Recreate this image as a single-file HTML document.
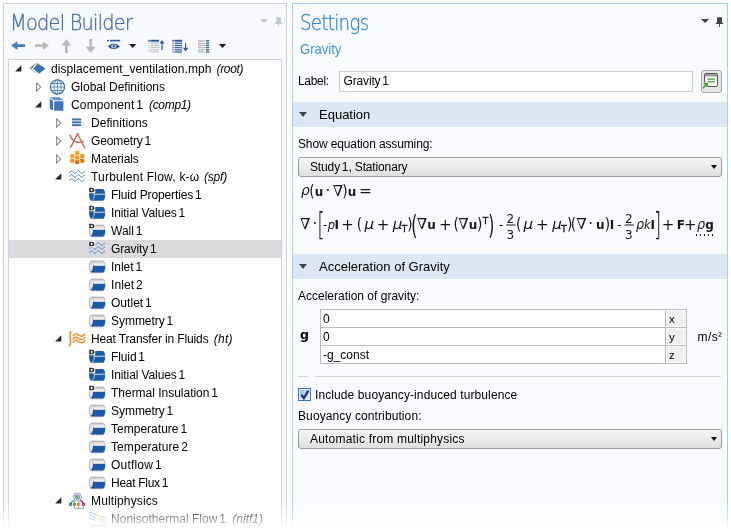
<!DOCTYPE html>
<html>
<head>
<meta charset="utf-8">
<title>Model Builder - Settings</title>
<style>
html,body{margin:0;padding:0;}
body{width:731px;height:529px;overflow:hidden;background:#fff;position:relative;font-family:"Liberation Sans",sans-serif;font-size:12px;color:#000;}
.abs{position:absolute;}
#app{position:absolute;left:0;top:0;width:731px;height:529px;will-change:transform;}
#left{position:absolute;left:3px;top:3px;width:282px;height:530px;background:#f8f9fc;border:1px solid #cdd0d7;}
#gap{position:absolute;left:287px;top:0;width:5px;height:529px;background:#fff;}
#right{position:absolute;left:292px;top:3px;width:434px;height:530px;background:#f9fbfe;border:1px solid #a3cdf6;}
.title{-webkit-text-stroke:0.3px currentColor;position:absolute;font-family:"DejaVu Sans Light","DejaVu Sans",sans-serif;font-weight:200;font-size:20.5px;line-height:24px;white-space:nowrap;transform-origin:0 0;}
#tree{position:absolute;left:8px;top:59px;width:272px;height:480px;background:#fff;border:1px solid #d0d4dc;}
.row{position:absolute;left:9px;width:272px;height:18px;line-height:18px;white-space:nowrap;font-size:12px;}
.row span.t{position:absolute;top:0;}
.row i{font-style:italic;}
.sel{background:#dadadc;}
.row .t{position:absolute;top:0;}
.row .it{font-style:italic;}
.ns{letter-spacing:-1.5px !important;}
.row .dim{color:#9a9a9a;}
.row svg{position:absolute;top:0;}
.row svg.ar{top:5px;}
.lbl{position:absolute;white-space:nowrap;font-size:12px;line-height:14px;}
.sec{position:absolute;left:293px;width:434px;height:25px;background:#dde7f4;}
.sec span{position:absolute;left:26px;top:5px;font-size:13px;line-height:16px;}
.sec:before{content:"";position:absolute;left:5.6px;top:10.4px;border-left:4.5px solid transparent;border-right:4.5px solid transparent;border-top:5px solid #444;}
.combo{position:absolute;left:298px;width:422px;height:18px;border:1px solid #9c9c9c;border-radius:3px;background:linear-gradient(#f3f3f3,#ebebeb 50%,#dfdfdf);box-shadow:inset 0 1px 0 #fcfcfc;}
.combo>span{position:absolute;left:11px;top:2px;font-size:12px;line-height:15px;}
.combo:after{content:"";position:absolute;right:4.4px;top:7px;border-left:3.6px solid transparent;border-right:3.6px solid transparent;border-top:4px solid #111;}
.inp{position:absolute;background:#fff;border:1px solid #cbced5;}
</style>
</head>
<body>
<div id="app">
<div id="left"></div>
<div id="gap"></div>
<div id="right"></div>

<div class="title" style="left:9.8px;top:11px;color:#3f6faf;letter-spacing:-0.8px;transform:scaleX(0.943);">Model Builder</div>
<div class="title" style="left:299.6px;top:11px;color:#2f86e0;letter-spacing:-0.8px;transform:scaleX(0.89);">Settings</div>
<div class="lbl" style="left:299.5px;top:41px;font-size:15px;line-height:16px;color:#3f92e4;transform-origin:0 0;transform:scaleX(0.871);">Gravity</div>

<svg class="abs" style="left:0;top:32px;" width="290" height="26" viewBox="0 32 290 26"><path d="M11.2,45.6 L17.4,41.3 L17.4,44.2 L25,44.2 L25,47 L17.4,47 L17.4,49.9 Z" fill="#3f7cc0"/><path d="M49,45.6 L42.8,41.3 L42.8,44.2 L35,44.2 L35,47 L42.8,47 L42.8,49.9 Z" fill="#bcbcbc"/><path d="M66.4,38.9 L71.3,45.4 L67.8,45.4 L67.8,53 L65,53 L65,45.4 L61.5,45.4 Z" fill="#bcbcbc"/><path d="M90.7,53.2 L95.6,46.7 L92.1,46.7 L92.1,39 L89.3,39 L89.3,46.7 L85.8,46.7 Z" fill="#bcbcbc"/><rect x="107.2" y="39.8" width="1.8" height="1.6" fill="#2d5a94"/><rect x="110" y="39.8" width="10.2" height="1.6" fill="#2d5a94"/><path d="M107.6,46.4 Q113.8,40.8 120,46.4 Q113.8,51.6 107.6,46.4 Z" fill="#2d5a94"/><ellipse cx="113.8" cy="46.3" rx="2.6" ry="1.7" fill="#eaf0fa"/><circle cx="113.8" cy="46.3" r="1.2" fill="#2d5a94"/><polygon points="129,44.1 136.2,44.1 132.6,48" fill="#1a1a1a"/><rect x="148.2" y="39.8" width="1.5" height="1.8" fill="#2d5a94"/><rect x="150.4" y="39.8" width="8.6" height="1.9" fill="#2d5a94"/><rect x="148.4" y="42.7" width="1.1999999999999886" height="1" fill="#b9b9b9"/><rect x="148.4" y="44.9" width="1.1999999999999886" height="1" fill="#b9b9b9"/><rect x="148.4" y="47.1" width="1.1999999999999886" height="1" fill="#b9b9b9"/><rect x="148.4" y="49.3" width="1.1999999999999886" height="1" fill="#b9b9b9"/><rect x="148.4" y="51.4" width="1.1999999999999886" height="1" fill="#b9b9b9"/><rect x="150.6" y="42.7" width="8.400000000000006" height="1" fill="#b9b9b9"/><rect x="150.6" y="44.9" width="8.400000000000006" height="1" fill="#b9b9b9"/><rect x="150.6" y="47.1" width="8.400000000000006" height="1" fill="#b9b9b9"/><rect x="150.6" y="49.3" width="8.400000000000006" height="1" fill="#b9b9b9"/><rect x="150.6" y="51.4" width="8.400000000000006" height="1" fill="#b9b9b9"/><path d="M162,40 L164.6,43.6 L162.6,43.6 L162.6,50 L161.4,50 L161.4,43.6 L159.4,43.6 Z" fill="#2d5a94"/><rect x="172.2" y="39.8" width="1.5" height="1.8" fill="#2d5a94"/><rect x="174.4" y="39.8" width="7.8" height="1.9" fill="#2d5a94"/><rect x="172.4" y="42.7" width="1.1999999999999886" height="1.2" fill="#2d5a94"/><rect x="172.4" y="44.9" width="1.1999999999999886" height="1.2" fill="#2d5a94"/><rect x="172.4" y="47.1" width="1.1999999999999886" height="1.2" fill="#2d5a94"/><rect x="172.4" y="49.3" width="1.1999999999999886" height="1.2" fill="#2d5a94"/><rect x="172.4" y="51.4" width="1.1999999999999886" height="1.2" fill="#2d5a94"/><rect x="174.6" y="42.7" width="7.599999999999994" height="1.2" fill="#2d5a94"/><rect x="174.6" y="44.9" width="7.599999999999994" height="1.2" fill="#2d5a94"/><rect x="174.6" y="47.1" width="7.599999999999994" height="1.2" fill="#2d5a94"/><rect x="174.6" y="49.3" width="7.599999999999994" height="1.2" fill="#2d5a94"/><rect x="174.6" y="51.4" width="7.599999999999994" height="1.2" fill="#2d5a94"/><path d="M185.6,51.6 L188.4,47.8 L186.2,47.8 L186.2,43.2 L185,43.2 L185,47.8 L182.8,47.8 Z" fill="#2d5a94"/><rect x="198" y="40.2" width="7" height="1.3" fill="#b9b9b9"/><rect x="198" y="42.5" width="7" height="1.3" fill="#b9b9b9"/><rect x="198" y="44.7" width="7" height="1.3" fill="#b9b9b9"/><rect x="198" y="46.9" width="7" height="1.3" fill="#b9b9b9"/><rect x="198" y="49.1" width="7" height="1.3" fill="#b9b9b9"/><rect x="198" y="51.3" width="7" height="1.3" fill="#b9b9b9"/><rect x="206" y="40.2" width="3.1999999999999886" height="1.3" fill="#2d5a94"/><rect x="206" y="42.5" width="3.1999999999999886" height="1.3" fill="#2d5a94"/><rect x="206" y="44.7" width="3.1999999999999886" height="1.3" fill="#2d5a94"/><rect x="206" y="46.9" width="3.1999999999999886" height="1.3" fill="#2d5a94"/><rect x="206" y="49.1" width="3.1999999999999886" height="1.3" fill="#2d5a94"/><rect x="206" y="51.3" width="3.1999999999999886" height="1.3" fill="#2d5a94"/><polygon points="218.8,44.1 226.2,44.1 222.5,48" fill="#1a1a1a"/></svg>
<svg class="abs" style="left:255px;top:14px;" width="32" height="16" viewBox="255 14 32 16"><polygon points="259.8,19 268.2,19 264,23" fill="#c3c7cf"/><path d="M276.3,17.2 H281 V22.8 H282.2 V23.9 H279 V27 H278.2 V23.9 H275 V22.8 H276.3 Z" fill="#c3c7cf"/></svg>
<svg class="abs" style="left:696px;top:14px;" width="32" height="16" viewBox="696 14 32 16"><polygon points="700.9,19 709.3,19 705.1,23" fill="#444"/><path d="M717,17.2 H722 V22.8 H723.2 V23.9 H720 V27 H719.1 V23.9 H715.8 V22.8 H717 Z" fill="#444"/></svg>
<div id="tree"></div>
<div id="rows">
<div class="row" style="top:60px;"><svg class="ar" style="left:6px;top:5px;" width="8" height="8" viewBox="0 0 8 8"><polygon points="6.3,0.3 6.3,6.5 0.1,6.5" fill="#262626"/></svg><svg class="ic" style="left:20px;" width="18" height="18" viewBox="0 0 18 18"><polygon points="0.5,8.2 7.6,2.8 16.5,8.6 9.2,14.4" fill="#3b6fb3"/><polyline points="7.9,3.4 3.5,8.9 9.7,14.2" fill="none" stroke="#fff" stroke-width="1.35"/><line x1="0.8" y1="8.2" x2="3.5" y2="8.9" stroke="#fff" stroke-width="0.6"/></svg><span id="t0" class="t" style="left:42px;letter-spacing:0.086px;">displacement_ventilation.mph</span><span id="i0" class="t it" style="left:207.5px;letter-spacing:-0.312px;">(root)</span></div>
<div class="row" style="top:78px;"><svg class="ar" style="left:27px;top:4px;" width="7" height="10" viewBox="0 0 7 10"><polygon points="0.6,0.9 4.8,5 0.6,9.1" fill="#fff" stroke="#8f8f8f" stroke-width="1.1"/></svg><svg class="ic" style="left:40px;" width="18" height="18" viewBox="0 0 18 18"><circle cx="8.5" cy="9" r="7.1" fill="#fff" stroke="#3f76bb" stroke-width="1.3"/><g fill="none" stroke="#4a80c4" stroke-width="0.85"><ellipse cx="8.5" cy="9" rx="3.5" ry="7.1"/><line x1="8.5" y1="2" x2="8.5" y2="16"/><line x1="1.5" y1="9" x2="15.5" y2="9"/><line x1="2.6" y1="5.5" x2="14.4" y2="5.5"/><line x1="2.6" y1="12.5" x2="14.4" y2="12.5"/></g></svg><span id="t1" class="t" style="left:62px;letter-spacing:-0.003px;">Global Definitions</span></div>
<div class="row" style="top:96px;"><svg class="ar" style="left:26px;top:5px;" width="8" height="8" viewBox="0 0 8 8"><polygon points="6.3,0.3 6.3,6.5 0.1,6.5" fill="#262626"/></svg><svg class="ic" style="left:40px;" width="18" height="18" viewBox="0 0 18 18"><polygon points="0.8,1.6 10.4,1.6 14.4,4.6 14.4,14.7 4.6,14.7 0.8,12.6" fill="#3f76bb"/><polygon points="0.8,1.6 10.4,1.6 14.4,4.6 4.6,4.6" fill="#5e8fcc"/><polyline points="1.1,1.9 4.6,4.7 14.4,4.7" fill="none" stroke="#fff" stroke-width="1.1"/><line x1="4.6" y1="4.7" x2="4.6" y2="14.7" stroke="#fff" stroke-width="1.1"/></svg><span id="t2" class="t" style="left:62px;letter-spacing:0.147px;">Component<span class="ns"> </span>1</span><span id="i2" class="t it" style="left:140.0px;letter-spacing:-0.317px;">(comp1)</span></div>
<div class="row" style="top:114px;"><svg class="ar" style="left:47px;top:4px;" width="7" height="10" viewBox="0 0 7 10"><polygon points="0.6,0.9 4.8,5 0.6,9.1" fill="#fff" stroke="#8f8f8f" stroke-width="1.1"/></svg><svg class="ic" style="left:60px;" width="18" height="18" viewBox="0 0 18 18"><rect x="3" y="4.5" width="9.2" height="1.9" fill="#3a6fb7"/><rect x="3" y="7.4" width="9.2" height="1.9" fill="#3a6fb7"/><rect x="3" y="10.2" width="9.2" height="1.9" fill="#3a6fb7"/></svg><span id="t3" class="t" style="left:82px;letter-spacing:0.061px;">Definitions</span></div>
<div class="row" style="top:132px;"><svg class="ar" style="left:47px;top:4px;" width="7" height="10" viewBox="0 0 7 10"><polygon points="0.6,0.9 4.8,5 0.6,9.1" fill="#fff" stroke="#8f8f8f" stroke-width="1.1"/></svg><svg class="ic" style="left:60px;" width="18" height="18" viewBox="0 0 18 18"><g fill="none" stroke="#dd6450" stroke-width="1.35" stroke-linecap="round"><path d="M8.6,1.8 L1.6,15.6"/><path d="M8.6,1.8 L15.6,15.6"/><path d="M1.2,3.2 C3,9.6 9.5,11.6 14.2,9.4"/><circle cx="8.6" cy="2.3" r="1.1" fill="#dd6450" stroke="none"/></g></svg><span id="t4" class="t" style="left:82px;letter-spacing:-0.122px;">Geometry<span class="ns"> </span>1</span></div>
<div class="row" style="top:150px;"><svg class="ar" style="left:47px;top:4px;" width="7" height="10" viewBox="0 0 7 10"><polygon points="0.6,0.9 4.8,5 0.6,9.1" fill="#fff" stroke="#8f8f8f" stroke-width="1.1"/></svg><svg class="ic" style="left:60px;" width="18" height="18" viewBox="0 0 18 18"><rect x="6.2" y="1" width="4.1" height="3.9" fill="#f8a21f"/><rect x="1.2" y="4.2" width="4.1" height="3.9" fill="#f8a21f"/><rect x="6.2" y="5.6" width="4.1" height="3.9" fill="#f39214"/><rect x="11.2" y="4.2" width="4.1" height="3.9" fill="#f39214"/><rect x="1.2" y="8.8" width="4.1" height="3.9" fill="#f39214"/><rect x="6.2" y="10.2" width="4.1" height="3.9" fill="#d9740f"/><rect x="11.2" y="8.8" width="4.1" height="3.9" fill="#d9740f"/></svg><span id="t5" class="t" style="left:82px;letter-spacing:-0.11px;">Materials</span></div>
<div class="row" style="top:168px;"><svg class="ar" style="left:46px;top:5px;" width="8" height="8" viewBox="0 0 8 8"><polygon points="6.3,0.3 6.3,6.5 0.1,6.5" fill="#262626"/></svg><svg class="ic" style="left:60px;" width="18" height="18" viewBox="0 0 18 18"><polyline points="0.20,4.75 0.70,4.19 1.20,3.61 1.70,3.13 2.20,2.85 2.70,2.82 3.20,3.06 3.70,3.50 4.20,4.07 4.70,4.64 5.20,5.11 5.70,5.37 6.20,5.37 6.70,5.11 7.20,4.64 7.70,4.07 8.20,3.50 8.70,3.06 9.20,2.82 9.70,2.85 10.20,3.13 10.70,3.61 11.20,4.19 11.70,4.75 12.20,5.18 12.70,5.39 13.20,5.33 13.70,5.03 14.20,4.54 14.70,3.95 15.20,3.40 15.70,2.99" fill="none" stroke="#4a82c9" stroke-width="1.0" stroke-linecap="round" stroke-linejoin="round"/><polyline points="0.20,8.65 0.70,8.09 1.20,7.51 1.70,7.03 2.20,6.75 2.70,6.72 3.20,6.96 3.70,7.40 4.20,7.97 4.70,8.54 5.20,9.01 5.70,9.27 6.20,9.27 6.70,9.01 7.20,8.54 7.70,7.97 8.20,7.40 8.70,6.96 9.20,6.72 9.70,6.75 10.20,7.03 10.70,7.51 11.20,8.09 11.70,8.65 12.20,9.08 12.70,9.29 13.20,9.23 13.70,8.93 14.20,8.44 14.70,7.85 15.20,7.30 15.70,6.89" fill="none" stroke="#4a82c9" stroke-width="1.0" stroke-linecap="round" stroke-linejoin="round"/><polyline points="0.20,12.65 0.70,12.09 1.20,11.51 1.70,11.03 2.20,10.75 2.70,10.72 3.20,10.96 3.70,11.40 4.20,11.97 4.70,12.54 5.20,13.01 5.70,13.27 6.20,13.27 6.70,13.01 7.20,12.54 7.70,11.97 8.20,11.40 8.70,10.96 9.20,10.72 9.70,10.75 10.20,11.03 10.70,11.51 11.20,12.09 11.70,12.65 12.20,13.08 12.70,13.29 13.20,13.23 13.70,12.93 14.20,12.44 14.70,11.85 15.20,11.30 15.70,10.89" fill="none" stroke="#4a82c9" stroke-width="1.0" stroke-linecap="round" stroke-linejoin="round"/></svg><span id="t6" class="t" style="left:82px;letter-spacing:0.216px;">Turbulent Flow, k-ω</span><span id="i6" class="t it" style="left:195.0px;letter-spacing:-0.2px;">(spf)</span></div>
<div class="row" style="top:186px;"><svg class="ic" style="left:80px;" width="18" height="18" viewBox="0 0 18 18"><path d="M3,3 H13.4 C15.2,3 16.2,5.6 16.2,8.9 C16.2,12.3 15.2,14.8 13.4,14.8 H3 C1.2,14.8 0.1,12.3 0.1,8.9 C0.1,5.6 1.2,3 3,3 Z" fill="#1c5aa6"/><path d="M2.6,3.4 C4.4,3.6 5.2,6 5.2,8.9 C5.2,11.8 4.4,14.2 2.6,14.4" fill="none" stroke="#a9c3e4" stroke-width="1"/><path d="M4.8,8.4 L16.1,8.1" stroke="#f2f6fb" stroke-width="0.85" fill="none"/><rect x="-0.4" y="0.7" width="6.6" height="6.5" fill="#fff"/><text transform="translate(0.1 6.2) scale(1.18 0.95)" x="0" y="0" font-family="Liberation Sans, sans-serif" font-weight="bold" font-size="6.4" fill="#111" stroke="#111" stroke-width="0.35">D</text></svg><span id="t7" class="t" style="left:102px;letter-spacing:-0.115px;">Fluid Properties<span class="ns"> </span>1</span></div>
<div class="row" style="top:204px;"><svg class="ic" style="left:80px;" width="18" height="18" viewBox="0 0 18 18"><path d="M3,3 H13.4 C15.2,3 16.2,5.6 16.2,8.9 C16.2,12.3 15.2,14.8 13.4,14.8 H3 C1.2,14.8 0.1,12.3 0.1,8.9 C0.1,5.6 1.2,3 3,3 Z" fill="#1c5aa6"/><path d="M2.6,3.4 C4.4,3.6 5.2,6 5.2,8.9 C5.2,11.8 4.4,14.2 2.6,14.4" fill="none" stroke="#a9c3e4" stroke-width="1"/><path d="M4.8,8.4 L16.1,8.1" stroke="#f2f6fb" stroke-width="0.85" fill="none"/><rect x="-0.4" y="0.7" width="6.6" height="6.5" fill="#fff"/><text transform="translate(0.1 6.2) scale(1.18 0.95)" x="0" y="0" font-family="Liberation Sans, sans-serif" font-weight="bold" font-size="6.4" fill="#111" stroke="#111" stroke-width="0.35">D</text></svg><span id="t8" class="t" style="left:102px;letter-spacing:-0.105px;">Initial Values<span class="ns"> </span>1</span></div>
<div class="row" style="top:222px;"><svg class="ic" style="left:80px;" width="18" height="18" viewBox="0 0 18 18"><defs><linearGradient id="gd" x1="0" y1="0" x2="0" y2="1"><stop offset="0" stop-color="#bfc1c4"/><stop offset="0.22" stop-color="#e6e7e8"/><stop offset="0.38" stop-color="#fbfbfb"/><stop offset="0.5" stop-color="#e9e9ea"/><stop offset="1" stop-color="#c9cbce"/></linearGradient></defs><path d="M3,3 H13.4 C15.2,3 16.2,5.6 16.2,8.9 C16.2,12.3 15.2,14.8 13.4,14.8 H3 C1.2,14.8 0.1,12.3 0.1,8.9 C0.1,5.6 1.2,3 3,3 Z" fill="url(#gd)" stroke="#a3a6aa" stroke-width="0.7"/><path d="M2.4,3.4 C3.9,3.6 4.4,6 4.4,8.9 C4.4,11.8 3.9,14.2 2.4,14.4 C1,14 0.5,11.6 0.5,8.9 C0.5,6.2 1,3.8 2.4,3.4 Z" fill="#e6e7e9" stroke="#a4a7ab" stroke-width="0.6"/><path d="M4,7.7 H16 C16.3,12 15.2,14.5 13.4,14.5 H2.6 C2,14.5 1.7,14.3 1.5,14 C3.2,12.6 4.1,10.6 4,7.7 Z" fill="#1c5aa6"/><rect x="-0.4" y="0.7" width="6.6" height="6.5" fill="#fff"/><text transform="translate(0.1 6.2) scale(1.18 0.95)" x="0" y="0" font-family="Liberation Sans, sans-serif" font-weight="bold" font-size="6.4" fill="#111" stroke="#111" stroke-width="0.35">D</text></svg><span id="t9" class="t" style="left:102px;letter-spacing:-0.004px;">Wall<span class="ns"> </span>1</span></div>
<div class="row sel" style="top:240px;"><svg class="ic" style="left:80px;" width="18" height="18" viewBox="0 0 18 18"><polyline points="0.20,4.75 0.70,4.19 1.20,3.61 1.70,3.13 2.20,2.85 2.70,2.82 3.20,3.06 3.70,3.50 4.20,4.07 4.70,4.64 5.20,5.11 5.70,5.37 6.20,5.37 6.70,5.11 7.20,4.64 7.70,4.07 8.20,3.50 8.70,3.06 9.20,2.82 9.70,2.85 10.20,3.13 10.70,3.61 11.20,4.19 11.70,4.75 12.20,5.18 12.70,5.39 13.20,5.33 13.70,5.03 14.20,4.54 14.70,3.95 15.20,3.40 15.70,2.99" fill="none" stroke="#4a82c9" stroke-width="1.0" stroke-linecap="round" stroke-linejoin="round"/><polyline points="0.20,8.65 0.70,8.09 1.20,7.51 1.70,7.03 2.20,6.75 2.70,6.72 3.20,6.96 3.70,7.40 4.20,7.97 4.70,8.54 5.20,9.01 5.70,9.27 6.20,9.27 6.70,9.01 7.20,8.54 7.70,7.97 8.20,7.40 8.70,6.96 9.20,6.72 9.70,6.75 10.20,7.03 10.70,7.51 11.20,8.09 11.70,8.65 12.20,9.08 12.70,9.29 13.20,9.23 13.70,8.93 14.20,8.44 14.70,7.85 15.20,7.30 15.70,6.89" fill="none" stroke="#4a82c9" stroke-width="1.0" stroke-linecap="round" stroke-linejoin="round"/><polyline points="0.20,12.65 0.70,12.09 1.20,11.51 1.70,11.03 2.20,10.75 2.70,10.72 3.20,10.96 3.70,11.40 4.20,11.97 4.70,12.54 5.20,13.01 5.70,13.27 6.20,13.27 6.70,13.01 7.20,12.54 7.70,11.97 8.20,11.40 8.70,10.96 9.20,10.72 9.70,10.75 10.20,11.03 10.70,11.51 11.20,12.09 11.70,12.65 12.20,13.08 12.70,13.29 13.20,13.23 13.70,12.93 14.20,12.44 14.70,11.85 15.20,11.30 15.70,10.89" fill="none" stroke="#4a82c9" stroke-width="1.0" stroke-linecap="round" stroke-linejoin="round"/><rect x="-0.4" y="0.7" width="6.6" height="6.5" fill="#fff"/><text transform="translate(0.1 6.2) scale(1.18 0.95)" x="0" y="0" font-family="Liberation Sans, sans-serif" font-weight="bold" font-size="6.4" fill="#111" stroke="#111" stroke-width="0.35">D</text></svg><span id="t10" class="t" style="left:102px;letter-spacing:-0.139px;">Gravity<span class="ns"> </span>1</span></div>
<div class="row" style="top:258px;"><svg class="ic" style="left:80px;" width="18" height="18" viewBox="0 0 18 18"><defs><linearGradient id="gn" x1="0" y1="0" x2="0" y2="1"><stop offset="0" stop-color="#bfc1c4"/><stop offset="0.22" stop-color="#e6e7e8"/><stop offset="0.38" stop-color="#fbfbfb"/><stop offset="0.5" stop-color="#e9e9ea"/><stop offset="1" stop-color="#c9cbce"/></linearGradient></defs><path d="M3,3 H13.4 C15.2,3 16.2,5.6 16.2,8.9 C16.2,12.3 15.2,14.8 13.4,14.8 H3 C1.2,14.8 0.1,12.3 0.1,8.9 C0.1,5.6 1.2,3 3,3 Z" fill="url(#gn)" stroke="#a3a6aa" stroke-width="0.7"/><path d="M2.4,3.4 C3.9,3.6 4.4,6 4.4,8.9 C4.4,11.8 3.9,14.2 2.4,14.4 C1,14 0.5,11.6 0.5,8.9 C0.5,6.2 1,3.8 2.4,3.4 Z" fill="#e6e7e9" stroke="#a4a7ab" stroke-width="0.6"/><path d="M4,7.7 H16 C16.3,12 15.2,14.5 13.4,14.5 H2.6 C2,14.5 1.7,14.3 1.5,14 C3.2,12.6 4.1,10.6 4,7.7 Z" fill="#1c5aa6"/></svg><span id="t11" class="t" style="left:102px;letter-spacing:-0.031px;">Inlet<span class="ns"> </span>1</span></div>
<div class="row" style="top:276px;"><svg class="ic" style="left:80px;" width="18" height="18" viewBox="0 0 18 18"><defs><linearGradient id="gn" x1="0" y1="0" x2="0" y2="1"><stop offset="0" stop-color="#bfc1c4"/><stop offset="0.22" stop-color="#e6e7e8"/><stop offset="0.38" stop-color="#fbfbfb"/><stop offset="0.5" stop-color="#e9e9ea"/><stop offset="1" stop-color="#c9cbce"/></linearGradient></defs><path d="M3,3 H13.4 C15.2,3 16.2,5.6 16.2,8.9 C16.2,12.3 15.2,14.8 13.4,14.8 H3 C1.2,14.8 0.1,12.3 0.1,8.9 C0.1,5.6 1.2,3 3,3 Z" fill="url(#gn)" stroke="#a3a6aa" stroke-width="0.7"/><path d="M2.4,3.4 C3.9,3.6 4.4,6 4.4,8.9 C4.4,11.8 3.9,14.2 2.4,14.4 C1,14 0.5,11.6 0.5,8.9 C0.5,6.2 1,3.8 2.4,3.4 Z" fill="#e6e7e9" stroke="#a4a7ab" stroke-width="0.6"/><path d="M4,7.7 H16 C16.3,12 15.2,14.5 13.4,14.5 H2.6 C2,14.5 1.7,14.3 1.5,14 C3.2,12.6 4.1,10.6 4,7.7 Z" fill="#1c5aa6"/></svg><span id="t12" class="t" style="left:102px;letter-spacing:0.083px;">Inlet<span class="ns"> </span>2</span></div>
<div class="row" style="top:294px;"><svg class="ic" style="left:80px;" width="18" height="18" viewBox="0 0 18 18"><defs><linearGradient id="gn" x1="0" y1="0" x2="0" y2="1"><stop offset="0" stop-color="#bfc1c4"/><stop offset="0.22" stop-color="#e6e7e8"/><stop offset="0.38" stop-color="#fbfbfb"/><stop offset="0.5" stop-color="#e9e9ea"/><stop offset="1" stop-color="#c9cbce"/></linearGradient></defs><path d="M3,3 H13.4 C15.2,3 16.2,5.6 16.2,8.9 C16.2,12.3 15.2,14.8 13.4,14.8 H3 C1.2,14.8 0.1,12.3 0.1,8.9 C0.1,5.6 1.2,3 3,3 Z" fill="url(#gn)" stroke="#a3a6aa" stroke-width="0.7"/><path d="M2.4,3.4 C3.9,3.6 4.4,6 4.4,8.9 C4.4,11.8 3.9,14.2 2.4,14.4 C1,14 0.5,11.6 0.5,8.9 C0.5,6.2 1,3.8 2.4,3.4 Z" fill="#e6e7e9" stroke="#a4a7ab" stroke-width="0.6"/><path d="M4,7.7 H16 C16.3,12 15.2,14.5 13.4,14.5 H2.6 C2,14.5 1.7,14.3 1.5,14 C3.2,12.6 4.1,10.6 4,7.7 Z" fill="#1c5aa6"/></svg><span id="t13" class="t" style="left:102px;letter-spacing:0.032px;">Outlet<span class="ns"> </span>1</span></div>
<div class="row" style="top:312px;"><svg class="ic" style="left:80px;" width="18" height="18" viewBox="0 0 18 18"><defs><linearGradient id="gn" x1="0" y1="0" x2="0" y2="1"><stop offset="0" stop-color="#bfc1c4"/><stop offset="0.22" stop-color="#e6e7e8"/><stop offset="0.38" stop-color="#fbfbfb"/><stop offset="0.5" stop-color="#e9e9ea"/><stop offset="1" stop-color="#c9cbce"/></linearGradient></defs><path d="M3,3 H13.4 C15.2,3 16.2,5.6 16.2,8.9 C16.2,12.3 15.2,14.8 13.4,14.8 H3 C1.2,14.8 0.1,12.3 0.1,8.9 C0.1,5.6 1.2,3 3,3 Z" fill="url(#gn)" stroke="#a3a6aa" stroke-width="0.7"/><path d="M2.4,3.4 C3.9,3.6 4.4,6 4.4,8.9 C4.4,11.8 3.9,14.2 2.4,14.4 C1,14 0.5,11.6 0.5,8.9 C0.5,6.2 1,3.8 2.4,3.4 Z" fill="#e6e7e9" stroke="#a4a7ab" stroke-width="0.6"/><path d="M4,7.7 H16 C16.3,12 15.2,14.5 13.4,14.5 H2.6 C2,14.5 1.7,14.3 1.5,14 C3.2,12.6 4.1,10.6 4,7.7 Z" fill="#1c5aa6"/></svg><span id="t14" class="t" style="left:102px;letter-spacing:-0.033px;">Symmetry<span class="ns"> </span>1</span></div>
<div class="row" style="top:330px;"><svg class="ar" style="left:46px;top:5px;" width="8" height="8" viewBox="0 0 8 8"><polygon points="6.3,0.3 6.3,6.5 0.1,6.5" fill="#262626"/></svg><svg class="ic" style="left:60px;" width="18" height="18" viewBox="0 0 18 18"><path d="M1.6,1.8 C-0.2,6 3,10.5 0.8,16" fill="none" stroke="#f28c1c" stroke-width="1.6" stroke-linecap="round"/><g fill="none" stroke="#f28c1c" stroke-width="1.4" stroke-linecap="round"><path d="M4.2,5.9 C5.6,3.3 7.8,3.5 9.6,5.1 S13.8,6.9 15.9,4.0"/><path d="M4.2,9.2 C5.6,6.6 7.8,6.8 9.6,8.4 S13.8,10.2 15.9,7.3"/><path d="M4.2,12.4 C5.6,9.8 7.8,10.0 9.6,11.6 S13.8,13.4 15.9,10.5"/></g></svg><span id="t15" class="t" style="left:82px;letter-spacing:-0.14px;">Heat Transfer in Fluids</span><span id="i15" class="t it" style="left:204.8px;letter-spacing:0.226px;">(ht)</span></div>
<div class="row" style="top:348px;"><svg class="ic" style="left:80px;" width="18" height="18" viewBox="0 0 18 18"><path d="M3,3 H13.4 C15.2,3 16.2,5.6 16.2,8.9 C16.2,12.3 15.2,14.8 13.4,14.8 H3 C1.2,14.8 0.1,12.3 0.1,8.9 C0.1,5.6 1.2,3 3,3 Z" fill="#1c5aa6"/><path d="M2.6,3.4 C4.4,3.6 5.2,6 5.2,8.9 C5.2,11.8 4.4,14.2 2.6,14.4" fill="none" stroke="#a9c3e4" stroke-width="1"/><path d="M4.8,8.4 L16.1,8.1" stroke="#f2f6fb" stroke-width="0.85" fill="none"/><rect x="-0.4" y="0.7" width="6.6" height="6.5" fill="#fff"/><text transform="translate(0.1 6.2) scale(1.18 0.95)" x="0" y="0" font-family="Liberation Sans, sans-serif" font-weight="bold" font-size="6.4" fill="#111" stroke="#111" stroke-width="0.35">D</text></svg><span id="t16" class="t" style="left:102px;letter-spacing:-0.107px;">Fluid<span class="ns"> </span>1</span></div>
<div class="row" style="top:366px;"><svg class="ic" style="left:80px;" width="18" height="18" viewBox="0 0 18 18"><path d="M3,3 H13.4 C15.2,3 16.2,5.6 16.2,8.9 C16.2,12.3 15.2,14.8 13.4,14.8 H3 C1.2,14.8 0.1,12.3 0.1,8.9 C0.1,5.6 1.2,3 3,3 Z" fill="#1c5aa6"/><path d="M2.6,3.4 C4.4,3.6 5.2,6 5.2,8.9 C5.2,11.8 4.4,14.2 2.6,14.4" fill="none" stroke="#a9c3e4" stroke-width="1"/><path d="M4.8,8.4 L16.1,8.1" stroke="#f2f6fb" stroke-width="0.85" fill="none"/><rect x="-0.4" y="0.7" width="6.6" height="6.5" fill="#fff"/><text transform="translate(0.1 6.2) scale(1.18 0.95)" x="0" y="0" font-family="Liberation Sans, sans-serif" font-weight="bold" font-size="6.4" fill="#111" stroke="#111" stroke-width="0.35">D</text></svg><span id="t17" class="t" style="left:102px;letter-spacing:-0.105px;">Initial Values<span class="ns"> </span>1</span></div>
<div class="row" style="top:384px;"><svg class="ic" style="left:80px;" width="18" height="18" viewBox="0 0 18 18"><defs><linearGradient id="gd" x1="0" y1="0" x2="0" y2="1"><stop offset="0" stop-color="#bfc1c4"/><stop offset="0.22" stop-color="#e6e7e8"/><stop offset="0.38" stop-color="#fbfbfb"/><stop offset="0.5" stop-color="#e9e9ea"/><stop offset="1" stop-color="#c9cbce"/></linearGradient></defs><path d="M3,3 H13.4 C15.2,3 16.2,5.6 16.2,8.9 C16.2,12.3 15.2,14.8 13.4,14.8 H3 C1.2,14.8 0.1,12.3 0.1,8.9 C0.1,5.6 1.2,3 3,3 Z" fill="url(#gd)" stroke="#a3a6aa" stroke-width="0.7"/><path d="M2.4,3.4 C3.9,3.6 4.4,6 4.4,8.9 C4.4,11.8 3.9,14.2 2.4,14.4 C1,14 0.5,11.6 0.5,8.9 C0.5,6.2 1,3.8 2.4,3.4 Z" fill="#e6e7e9" stroke="#a4a7ab" stroke-width="0.6"/><path d="M4,7.7 H16 C16.3,12 15.2,14.5 13.4,14.5 H2.6 C2,14.5 1.7,14.3 1.5,14 C3.2,12.6 4.1,10.6 4,7.7 Z" fill="#1c5aa6"/><rect x="-0.4" y="0.7" width="6.6" height="6.5" fill="#fff"/><text transform="translate(0.1 6.2) scale(1.18 0.95)" x="0" y="0" font-family="Liberation Sans, sans-serif" font-weight="bold" font-size="6.4" fill="#111" stroke="#111" stroke-width="0.35">D</text></svg><span id="t18" class="t" style="left:102px;letter-spacing:-0.017px;">Thermal Insulation<span class="ns"> </span>1</span></div>
<div class="row" style="top:402px;"><svg class="ic" style="left:80px;" width="18" height="18" viewBox="0 0 18 18"><defs><linearGradient id="gn" x1="0" y1="0" x2="0" y2="1"><stop offset="0" stop-color="#bfc1c4"/><stop offset="0.22" stop-color="#e6e7e8"/><stop offset="0.38" stop-color="#fbfbfb"/><stop offset="0.5" stop-color="#e9e9ea"/><stop offset="1" stop-color="#c9cbce"/></linearGradient></defs><path d="M3,3 H13.4 C15.2,3 16.2,5.6 16.2,8.9 C16.2,12.3 15.2,14.8 13.4,14.8 H3 C1.2,14.8 0.1,12.3 0.1,8.9 C0.1,5.6 1.2,3 3,3 Z" fill="url(#gn)" stroke="#a3a6aa" stroke-width="0.7"/><path d="M2.4,3.4 C3.9,3.6 4.4,6 4.4,8.9 C4.4,11.8 3.9,14.2 2.4,14.4 C1,14 0.5,11.6 0.5,8.9 C0.5,6.2 1,3.8 2.4,3.4 Z" fill="#e6e7e9" stroke="#a4a7ab" stroke-width="0.6"/><path d="M4,7.7 H16 C16.3,12 15.2,14.5 13.4,14.5 H2.6 C2,14.5 1.7,14.3 1.5,14 C3.2,12.6 4.1,10.6 4,7.7 Z" fill="#1c5aa6"/></svg><span id="t19" class="t" style="left:102px;letter-spacing:-0.033px;">Symmetry<span class="ns"> </span>1</span></div>
<div class="row" style="top:420px;"><svg class="ic" style="left:80px;" width="18" height="18" viewBox="0 0 18 18"><defs><linearGradient id="gn" x1="0" y1="0" x2="0" y2="1"><stop offset="0" stop-color="#bfc1c4"/><stop offset="0.22" stop-color="#e6e7e8"/><stop offset="0.38" stop-color="#fbfbfb"/><stop offset="0.5" stop-color="#e9e9ea"/><stop offset="1" stop-color="#c9cbce"/></linearGradient></defs><path d="M3,3 H13.4 C15.2,3 16.2,5.6 16.2,8.9 C16.2,12.3 15.2,14.8 13.4,14.8 H3 C1.2,14.8 0.1,12.3 0.1,8.9 C0.1,5.6 1.2,3 3,3 Z" fill="url(#gn)" stroke="#a3a6aa" stroke-width="0.7"/><path d="M2.4,3.4 C3.9,3.6 4.4,6 4.4,8.9 C4.4,11.8 3.9,14.2 2.4,14.4 C1,14 0.5,11.6 0.5,8.9 C0.5,6.2 1,3.8 2.4,3.4 Z" fill="#e6e7e9" stroke="#a4a7ab" stroke-width="0.6"/><path d="M4,7.7 H16 C16.3,12 15.2,14.5 13.4,14.5 H2.6 C2,14.5 1.7,14.3 1.5,14 C3.2,12.6 4.1,10.6 4,7.7 Z" fill="#1c5aa6"/></svg><span id="t20" class="t" style="left:102px;letter-spacing:0.015px;">Temperature<span class="ns"> </span>1</span></div>
<div class="row" style="top:438px;"><svg class="ic" style="left:80px;" width="18" height="18" viewBox="0 0 18 18"><defs><linearGradient id="gn" x1="0" y1="0" x2="0" y2="1"><stop offset="0" stop-color="#bfc1c4"/><stop offset="0.22" stop-color="#e6e7e8"/><stop offset="0.38" stop-color="#fbfbfb"/><stop offset="0.5" stop-color="#e9e9ea"/><stop offset="1" stop-color="#c9cbce"/></linearGradient></defs><path d="M3,3 H13.4 C15.2,3 16.2,5.6 16.2,8.9 C16.2,12.3 15.2,14.8 13.4,14.8 H3 C1.2,14.8 0.1,12.3 0.1,8.9 C0.1,5.6 1.2,3 3,3 Z" fill="url(#gn)" stroke="#a3a6aa" stroke-width="0.7"/><path d="M2.4,3.4 C3.9,3.6 4.4,6 4.4,8.9 C4.4,11.8 3.9,14.2 2.4,14.4 C1,14 0.5,11.6 0.5,8.9 C0.5,6.2 1,3.8 2.4,3.4 Z" fill="#e6e7e9" stroke="#a4a7ab" stroke-width="0.6"/><path d="M4,7.7 H16 C16.3,12 15.2,14.5 13.4,14.5 H2.6 C2,14.5 1.7,14.3 1.5,14 C3.2,12.6 4.1,10.6 4,7.7 Z" fill="#1c5aa6"/></svg><span id="t21" class="t" style="left:102px;letter-spacing:0.084px;">Temperature<span class="ns"> </span>2</span></div>
<div class="row" style="top:456px;"><svg class="ic" style="left:80px;" width="18" height="18" viewBox="0 0 18 18"><defs><linearGradient id="gn" x1="0" y1="0" x2="0" y2="1"><stop offset="0" stop-color="#bfc1c4"/><stop offset="0.22" stop-color="#e6e7e8"/><stop offset="0.38" stop-color="#fbfbfb"/><stop offset="0.5" stop-color="#e9e9ea"/><stop offset="1" stop-color="#c9cbce"/></linearGradient></defs><path d="M3,3 H13.4 C15.2,3 16.2,5.6 16.2,8.9 C16.2,12.3 15.2,14.8 13.4,14.8 H3 C1.2,14.8 0.1,12.3 0.1,8.9 C0.1,5.6 1.2,3 3,3 Z" fill="url(#gn)" stroke="#a3a6aa" stroke-width="0.7"/><path d="M2.4,3.4 C3.9,3.6 4.4,6 4.4,8.9 C4.4,11.8 3.9,14.2 2.4,14.4 C1,14 0.5,11.6 0.5,8.9 C0.5,6.2 1,3.8 2.4,3.4 Z" fill="#e6e7e9" stroke="#a4a7ab" stroke-width="0.6"/><path d="M4,7.7 H16 C16.3,12 15.2,14.5 13.4,14.5 H2.6 C2,14.5 1.7,14.3 1.5,14 C3.2,12.6 4.1,10.6 4,7.7 Z" fill="#1c5aa6"/></svg><span id="t22" class="t" style="left:102px;letter-spacing:0.198px;">Outflow<span class="ns"> </span>1</span></div>
<div class="row" style="top:474px;"><svg class="ic" style="left:80px;" width="18" height="18" viewBox="0 0 18 18"><defs><linearGradient id="gn" x1="0" y1="0" x2="0" y2="1"><stop offset="0" stop-color="#bfc1c4"/><stop offset="0.22" stop-color="#e6e7e8"/><stop offset="0.38" stop-color="#fbfbfb"/><stop offset="0.5" stop-color="#e9e9ea"/><stop offset="1" stop-color="#c9cbce"/></linearGradient></defs><path d="M3,3 H13.4 C15.2,3 16.2,5.6 16.2,8.9 C16.2,12.3 15.2,14.8 13.4,14.8 H3 C1.2,14.8 0.1,12.3 0.1,8.9 C0.1,5.6 1.2,3 3,3 Z" fill="url(#gn)" stroke="#a3a6aa" stroke-width="0.7"/><path d="M2.4,3.4 C3.9,3.6 4.4,6 4.4,8.9 C4.4,11.8 3.9,14.2 2.4,14.4 C1,14 0.5,11.6 0.5,8.9 C0.5,6.2 1,3.8 2.4,3.4 Z" fill="#e6e7e9" stroke="#a4a7ab" stroke-width="0.6"/><path d="M4,7.7 H16 C16.3,12 15.2,14.5 13.4,14.5 H2.6 C2,14.5 1.7,14.3 1.5,14 C3.2,12.6 4.1,10.6 4,7.7 Z" fill="#1c5aa6"/></svg><span id="t23" class="t" style="left:102px;letter-spacing:-0.281px;">Heat Flux<span class="ns"> </span>1</span></div>
<div class="row" style="top:492px;"><svg class="ar" style="left:46px;top:5px;" width="8" height="8" viewBox="0 0 8 8"><polygon points="6.3,0.3 6.3,6.5 0.1,6.5" fill="#262626"/></svg><svg class="ic" style="left:60px;" width="18" height="18" viewBox="0 0 18 18"><g fill="none" stroke="#8c9db5" stroke-width="0.9"><ellipse cx="8.3" cy="5" rx="4.6" ry="1.8"/><ellipse cx="8.3" cy="5" rx="4.6" ry="1.8" transform="rotate(60 8.3 5)"/><ellipse cx="8.3" cy="5" rx="4.6" ry="1.8" transform="rotate(-60 8.3 5)"/></g><circle cx="8.3" cy="5" r="1.3" fill="#3fae49"/><g stroke="#7a7a7a" stroke-width="0.9" fill="none"><path d="M5.4,13.9 V16.4 H14.7 V13.9 M9.4,13.9 V16.4"/></g><path d="M1.6,11 L4.8,8.4" stroke="#3f76bb" stroke-width="1.2"/><path d="M14.6,11 L11.4,8.2" stroke="#e6189a" stroke-width="1.6"/><path d="M5.4,11 V9.4" stroke="#3fae49" stroke-width="1.2"/><path d="M9.4,11 V9.4" stroke="#f0762a" stroke-width="1.2"/><rect x="0" y="10.9" width="3" height="3" fill="#3f76bb"/><rect x="4" y="10.9" width="2.9" height="3" fill="#3fae49"/><rect x="7.9" y="10.9" width="2.9" height="3" fill="#f0762a"/><rect x="13" y="10.9" width="3" height="3" fill="#e6189a"/></svg><span id="t24" class="t" style="left:82px;letter-spacing:0.137px;">Multiphysics</span></div>
<div class="row" style="top:510px;"><svg class="ic" style="left:80px;" width="18" height="18" viewBox="0 0 18 18"><defs><linearGradient id="nf" x1="0" y1="0" x2="1" y2="0"><stop offset="0" stop-color="#3fa2ea"/><stop offset="0.33" stop-color="#6dbcf0"/><stop offset="0.5" stop-color="#f5b07a"/><stop offset="1" stop-color="#f07f2e"/></linearGradient></defs><g fill="none" stroke="url(#nf)" stroke-width="1"><path d="M0,2.5 C5,2.6 9,7.2 16,7.5"/><path d="M0,5.5 C5,5.6 9,10.2 16,10.5"/><path d="M0,8.5 C5,8.6 9,13.2 16,13.5"/></g><rect x="0" y="15.2" width="16" height="1.7" fill="#6f9edb"/></svg><span id="t25" class="t" style="left:102px;letter-spacing:0.021px;">Nonisothermal Flow<span class="ns"> </span>1</span><span id="i25" class="t it" style="left:223.3px;letter-spacing:0.002px;">(nitf1)</span></div>
</div>

<div class="lbl" style="left:298px;top:74px;letter-spacing:-0.3px;">Label:</div>
<div class="inp" style="left:339px;top:71px;width:352px;height:19px;"></div>
<div class="lbl" style="left:343.5px;top:74px;letter-spacing:-0.15px;">Gravity<span class="ns"> </span>1</div>

<div class="sec" style="top:102px;"><span id="s1">Equation</span></div>
<div class="lbl" style="left:298px;top:137px;letter-spacing:-0.13px;">Show equation assuming:</div>
<div class="combo" style="top:157px;"><span style="letter-spacing:-0.14px;">Study<span class="ns"> </span>1, Stationary</span></div>

<svg class="abs" style="left:294px;top:180px;" width="432" height="66" viewBox="294 180 432 66" fill="#161616"><text transform="translate(301.10 195.50) scale(1.021 1.000) translate(-301.10 -195.50)" x="300.90" y="195.50" font-size="13.5" font-family="'DejaVu Sans',sans-serif" font-style="italic">ρ</text><text transform="translate(310.30 195.90) scale(0.861 1.000) translate(-310.30 -195.90)" x="308.94" y="195.90" font-size="16" font-family="'DejaVu Sans',sans-serif">(</text><text x="314.70" y="195.50" font-size="12" font-family="'DejaVu Sans',sans-serif" font-weight="bold">u</text><text x="325.43" y="196.10" font-size="15" font-family="'DejaVu Sans',sans-serif">·</text><text x="332.82" y="195.50" font-size="15" font-family="'DejaVu Serif',serif">∇</text><text transform="translate(343.30 195.90) scale(0.861 1.000) translate(-343.30 -195.90)" x="342.02" y="195.90" font-size="16" font-family="'DejaVu Sans',sans-serif">)</text><text x="347.80" y="195.50" font-size="12" font-family="'DejaVu Sans',sans-serif" font-weight="bold">u</text><text x="359.07" y="196.30" font-size="15.5" font-family="'DejaVu Sans',sans-serif">=</text><text x="300.02" y="228.80" font-size="15" font-family="'DejaVu Serif',serif">∇</text><text x="312.53" y="229.40" font-size="15" font-family="'DejaVu Sans',sans-serif">·</text><text transform="translate(319.40 235.40) scale(1.213 2.030) translate(-319.40 -235.40)" x="317.64" y="235.40" font-size="16" font-family="'DejaVu Sans Light','DejaVu Sans',sans-serif" font-weight="200">[</text><text x="322.72" y="229.20" font-size="13" font-family="'DejaVu Sans',sans-serif">-</text><text x="327.86" y="228.80" font-size="11.5" font-family="'DejaVu Sans',sans-serif" font-style="italic">p</text><text x="334.62" y="228.80" font-size="12" font-family="'DejaVu Sans',sans-serif" font-weight="bold">I</text><text x="341.23" y="229.60" font-size="15" font-family="'DejaVu Sans',sans-serif">+</text><text transform="translate(358.00 229.20) scale(0.861 1.000) translate(-358.00 -229.20)" x="356.64" y="229.20" font-size="16" font-family="'DejaVu Sans',sans-serif">(</text><text transform="translate(364.20 228.80) scale(1.117 1.000) translate(-364.20 -228.80)" x="364.40" y="228.80" font-size="13.5" font-family="'DejaVu Sans',sans-serif" font-style="italic">μ</text><text x="376.82" y="229.60" font-size="15" font-family="'DejaVu Sans',sans-serif">+</text><text transform="translate(392.60 228.80) scale(1.117 1.000) translate(-392.60 -228.80)" x="392.80" y="228.80" font-size="13.5" font-family="'DejaVu Sans',sans-serif" font-style="italic">μ</text><text stroke="#161616" stroke-width="0.35" x="401.75" y="231.80" font-size="9" font-family="'DejaVu Sans',sans-serif">T</text><text transform="translate(408.40 229.20) scale(0.861 1.000) translate(-408.40 -229.20)" x="407.12" y="229.20" font-size="16" font-family="'DejaVu Sans',sans-serif">)</text><text transform="translate(412.60 234.00) scale(0.972 1.700) translate(-412.60 -234.00)" x="411.24" y="234.00" font-size="16" font-family="'DejaVu Sans',sans-serif">(</text><text x="416.82" y="228.80" font-size="15" font-family="'DejaVu Serif',serif">∇</text><text x="427.20" y="228.80" font-size="12" font-family="'DejaVu Sans',sans-serif" font-weight="bold">u</text><text x="438.93" y="229.60" font-size="15" font-family="'DejaVu Sans',sans-serif">+</text><text transform="translate(454.60 229.20) scale(0.861 1.000) translate(-454.60 -229.20)" x="453.24" y="229.20" font-size="16" font-family="'DejaVu Sans',sans-serif">(</text><text x="458.32" y="228.80" font-size="15" font-family="'DejaVu Serif',serif">∇</text><text x="468.80" y="228.80" font-size="12" font-family="'DejaVu Sans',sans-serif" font-weight="bold">u</text><text transform="translate(478.20 229.20) scale(0.861 1.000) translate(-478.20 -229.20)" x="476.92" y="229.20" font-size="16" font-family="'DejaVu Sans',sans-serif">)</text><text stroke="#161616" stroke-width="0.35" x="482.65" y="223.50" font-size="9" font-family="'DejaVu Sans',sans-serif">T</text><text transform="translate(489.60 234.00) scale(0.972 1.700) translate(-489.60 -234.00)" x="488.32" y="234.00" font-size="16" font-family="'DejaVu Sans',sans-serif">)</text><text x="498.81" y="229.20" font-size="13" font-family="'DejaVu Sans',sans-serif">-</text><text x="506.56" y="223.00" font-size="12" font-family="'DejaVu Sans',sans-serif">2</text><rect x="506.2" y="224.5" width="9.2" height="1" fill="#161616"/><text x="506.50" y="238.50" font-size="12" font-family="'DejaVu Sans',sans-serif">3</text><text transform="translate(517.20 229.20) scale(0.861 1.000) translate(-517.20 -229.20)" x="515.84" y="229.20" font-size="16" font-family="'DejaVu Sans',sans-serif">(</text><text transform="translate(523.20 228.80) scale(1.117 1.000) translate(-523.20 -228.80)" x="523.40" y="228.80" font-size="13.5" font-family="'DejaVu Sans',sans-serif" font-style="italic">μ</text><text x="535.92" y="229.60" font-size="15" font-family="'DejaVu Sans',sans-serif">+</text><text transform="translate(552.00 228.80) scale(1.117 1.000) translate(-552.00 -228.80)" x="552.20" y="228.80" font-size="13.5" font-family="'DejaVu Sans',sans-serif" font-style="italic">μ</text><text stroke="#161616" stroke-width="0.35" x="561.25" y="231.80" font-size="9" font-family="'DejaVu Sans',sans-serif">T</text><text transform="translate(568.00 229.20) scale(0.861 1.000) translate(-568.00 -229.20)" x="566.72" y="229.20" font-size="16" font-family="'DejaVu Sans',sans-serif">)</text><text transform="translate(571.90 229.20) scale(0.861 1.000) translate(-571.90 -229.20)" x="570.54" y="229.20" font-size="16" font-family="'DejaVu Sans',sans-serif">(</text><text x="576.33" y="228.80" font-size="15" font-family="'DejaVu Serif',serif">∇</text><text x="588.22" y="229.40" font-size="15" font-family="'DejaVu Sans',sans-serif">·</text><text x="596.00" y="228.80" font-size="12" font-family="'DejaVu Sans',sans-serif" font-weight="bold">u</text><text transform="translate(605.80 229.20) scale(0.861 1.000) translate(-605.80 -229.20)" x="604.52" y="229.20" font-size="16" font-family="'DejaVu Sans',sans-serif">)</text><text x="609.72" y="228.80" font-size="12" font-family="'DejaVu Sans',sans-serif" font-weight="bold">I</text><text x="616.91" y="229.20" font-size="13" font-family="'DejaVu Sans',sans-serif">-</text><text x="624.96" y="223.00" font-size="12" font-family="'DejaVu Sans',sans-serif">2</text><rect x="624.6" y="224.5" width="9.2" height="1" fill="#161616"/><text x="624.90" y="238.50" font-size="12" font-family="'DejaVu Sans',sans-serif">3</text><text transform="translate(636.20 228.80) scale(0.946 1.000) translate(-636.20 -228.80)" x="636.00" y="228.80" font-size="13.5" font-family="'DejaVu Sans',sans-serif" font-style="italic">ρ</text><text x="644.10" y="228.80" font-size="11.5" font-family="'DejaVu Sans',sans-serif" font-style="italic">k</text><text x="650.62" y="228.80" font-size="12" font-family="'DejaVu Sans',sans-serif" font-weight="bold">I</text><text transform="translate(655.80 235.40) scale(1.213 2.030) translate(-655.80 -235.40)" x="654.04" y="235.40" font-size="16" font-family="'DejaVu Sans Light','DejaVu Sans',sans-serif" font-weight="200">]</text><text x="661.72" y="229.60" font-size="15" font-family="'DejaVu Sans',sans-serif">+</text><text x="676.82" y="228.80" font-size="12" font-family="'DejaVu Sans',sans-serif" font-weight="bold">F</text><text x="684.02" y="229.60" font-size="15" font-family="'DejaVu Sans',sans-serif">+</text><text transform="translate(697.10 228.80) scale(0.946 1.000) translate(-697.10 -228.80)" x="696.90" y="228.80" font-size="13.5" font-family="'DejaVu Sans',sans-serif" font-style="italic">ρ</text><text x="705.22" y="228.80" font-size="12" font-family="'DejaVu Sans',sans-serif" font-weight="bold">g</text><line x1="696" y1="235" x2="713.5" y2="235" stroke="#161616" stroke-width="2" stroke-dasharray="1,3"/></svg>
<div class="sec" style="top:254px;"><span id="s2">Acceleration of Gravity</span></div>
<div class="lbl" style="left:298px;top:289px;">Acceleration of gravity:</div>

<div class="lbl" style="left:300px;top:326px;font:bold 12.5px/18px 'DejaVu Sans',sans-serif;">g</div>
<div class="abs" style="left:320px;top:309px;width:367px;height:55px;background:#b9bcc2;"></div>
<div class="abs" style="left:321px;top:310px;width:344px;height:17px;background:#fff;"></div>
<div class="abs" style="left:321px;top:328px;width:344px;height:17px;background:#fff;"></div>
<div class="abs" style="left:321px;top:346px;width:344px;height:17px;background:#fff;"></div>
<div class="abs" style="left:666px;top:310px;width:20px;height:17px;background:#efefef;box-shadow:inset 0 0 0 1px #fafafa;"></div>
<div class="abs" style="left:666px;top:328px;width:20px;height:17px;background:#efefef;box-shadow:inset 0 0 0 1px #fafafa;"></div>
<div class="abs" style="left:666px;top:346px;width:20px;height:17px;background:#efefef;box-shadow:inset 0 0 0 1px #fafafa;"></div>
<div class="lbl" style="left:323px;top:312px;">0</div>
<div class="lbl" style="left:323px;top:330px;">0</div>
<div class="lbl" style="left:323px;top:348px;">-g_const</div>
<div class="lbl" style="left:669px;top:312px;font-size:11.5px;">x</div>
<div class="lbl" style="left:669px;top:330px;font-size:11.5px;">y</div>
<div class="lbl" style="left:669px;top:348px;font-size:11.5px;">z</div>
<div class="lbl" style="left:697.5px;top:330px;letter-spacing:0.5px;">m/s<span style="font-size:10.5px;position:relative;top:-1.5px;letter-spacing:0;">²</span></div>

<div class="abs" style="left:298px;top:376px;width:10px;height:1px;background:#d3d6dc;"></div>
<div class="abs" style="left:315px;top:376px;width:406px;height:1px;background:#d3d6dc;"></div>
<div class="abs" style="left:298px;top:388px;width:11px;height:11px;border:1px solid #3479bd;background:#e6f3fc;"></div>
<div class="abs" style="left:300px;top:390px;width:9px;height:9px;background:linear-gradient(135deg,#86c0f2,#cfe7fb 70%,#e4f2fd);"></div>
<svg class="abs" style="left:298px;top:388px;" width="13" height="13" viewBox="0 0 13 13"><path d="M3.4,6.6 L5.9,10.2 L10.4,2.6" fill="none" stroke="#28287f" stroke-width="2.1"/></svg>
<div class="abs" style="left:701px;top:70px;width:19px;height:21px;border:1px solid #a6a6a6;border-radius:3px;background:#e6e6e6;"></div>
<svg class="abs" style="left:700px;top:69px;" width="24" height="26" viewBox="700 69 24 26"><rect x="704.5" y="73.5" width="13" height="13" rx="1.3" fill="#f4f4f4" stroke="#555" stroke-width="1"/><rect x="705" y="74" width="12" height="2.4" fill="#9a9a9a"/><rect x="707.4" y="78.6" width="7.6" height="1.1" fill="#3f9a2a"/><rect x="707.4" y="81.2" width="7.6" height="1.1" fill="#3f9a2a"/><rect x="702" y="82.4" width="5.6" height="6" fill="#e6e6e6"/><path d="M703,88.2 L706.2,84.4 M703.8,83.6 H707 V87" fill="none" stroke="#3f9a2a" stroke-width="1.5"/></svg>

<div class="lbl" style="left:315px;top:388px;letter-spacing:0.1px;">Include buoyancy-induced turbulence</div>
<div class="lbl" style="left:298px;top:409px;letter-spacing:0.1px;">Buoyancy contribution:</div>
<div class="combo" style="top:429px;"><span style="letter-spacing:0.2px;">Automatic from multiphysics</span></div>
<div class="abs" style="left:0;top:502px;width:731px;height:27px;background:linear-gradient(rgba(255,255,255,0),rgba(255,255,255,0.55) 60%,#fff);"></div>
</div>
</body>
</html>
